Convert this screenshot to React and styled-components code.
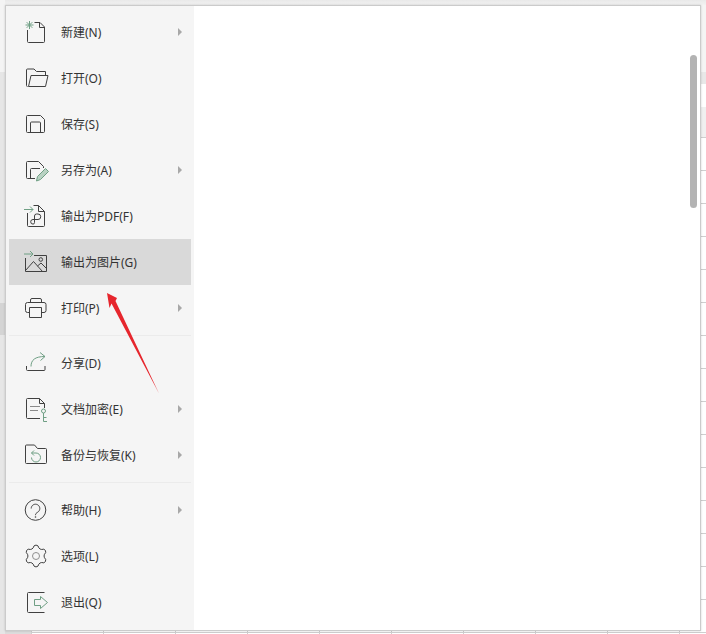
import React from "react";
import styled, { createGlobalStyle } from "styled-components";

const GlobalStyle = createGlobalStyle`
  html, body { margin: 0; padding: 0; background: #fff; }
  body { font-family: "Noto Sans", "Noto Sans CJK SC", sans-serif; }
`;

const ink = "#404040";
const green = "#6f9f84";

// six rounded lobes round the centre of the 32 box
const gearPath = () => {
  const at = (deg, r) => {
    const a = (deg * Math.PI) / 180;
    return `${(16 + r * Math.cos(a)).toFixed(1)} ${(16 + r * Math.sin(a)).toFixed(1)}`;
  };
  let d = `M${at(-101, 10.3)}`;
  for (let k = 0; k < 6; k++) {
    const a = -90 + k * 60;
    d += ` Q${at(a, 11.8)} ${at(a + 11, 10.3)}`;
    d += ` Q${at(a + 30, 6.4)} ${at(a + 49, 10.3)}`;
  }
  return d + "z";
};

const icons = {
  new: (
    <>
      <path d="M14.500 6.500H20L24.500 11V25.500a1 1 0 0 1-1 1H8.500a1 1 0 0 1-1-1V14" stroke={ink} />
      <path d="M19.500 6.500V11.500H24.500" stroke={ink} />
      <path d="M9.500 5v8M5.500 9h8M6.700 6.200l5.600 5.600M12.300 6.200l-5.600 5.600" stroke={green} />
    </>
  ),
  open: (
    <>
      <path d="M7.500 24.500a1 1 0 0 1-1-1V8a1 1 0 0 1 1-1h6.500l2.500 2.500H25.500V13.500" stroke={ink} />
      <path d="M11 13.500H28L25.500 24.500H8.500z" stroke={ink} />
    </>
  ),
  save: (
    <>
      <path d="M7.500 7.500H20.500L24.500 11.500V23.500a1 1 0 0 1-1 1H7.500a1 1 0 0 1-1-1V8.500a1 1 0 0 1 1-1z" stroke={ink} />
      <path d="M10.500 24.500V15a1 1 0 0 1 1-1H19.500a1 1 0 0 1 1 1V24.500" stroke={ink} />
    </>
  ),
  saveAs: (
    <>
      <path d="M15 24.500H7.500a1 1 0 0 1-1-1V8.500a1 1 0 0 1 1-1H18.500L23.500 12.500V14" stroke={ink} />
      <path d="M10.500 24.500V15.500a1 1 0 0 1 1-1H20" stroke={ink} />
      <path d="M16.500 27l1-4.500 8-8 3 3-8 8z" stroke={green} fill="#b9d2c3" />
    </>
  ),
  pdf: (
    <>
      <path d="M7.500 13V25.500a1 1 0 0 0 1 1H23.500a1 1 0 0 0 1-1V11.500L18.500 5.500H13.500" stroke={ink} />
      <path d="M18.500 5.500V11.500H24.500" stroke={ink} />
      <path d="M4 9.500H13M10 6.500l3 3-3 3" stroke={green} />
      <path d="M14.500 20V16a2 2 0 0 1 2-2H18a2.700 2.700 0 0 1 0 5.500H13a2.300 2.300 0 0 0 0 4.600h0a1.500 1.500 0 0 0 1.500-1.500V20" stroke={ink} />
    </>
  ),
  image: (
    <>
      <path d="M14 9.500H26.500V25.500H5.500V12" stroke={ink} />
      <path d="M5.500 24.500L13.500 15.500 22.500 25.500M17.500 20L21 17 26.500 22.500" stroke={ink} />
      <circle cx="20.800" cy="13.500" r="1.800" stroke={ink} />
      <path d="M4 8H13M10 5l3 3-3 3" stroke={green} />
    </>
  ),
  print: (
    <>
      <path d="M10.500 10.500V8a1.500 1.500 0 0 1 1.500-1.500H20a1.500 1.500 0 0 1 1.500 1.500V10.500" stroke={ink} />
      <path d="M9.500 20.500H7.500a2 2 0 0 1-2-2V12.500a2 2 0 0 1 2-2H24a2 2 0 0 1 2 2V18.500a2 2 0 0 1-2 2H21.500" stroke={ink} />
      <path d="M9.500 15.500H21.500V25.500H9.500z" stroke={ink} />
    </>
  ),
  share: (
    <>
      <path d="M6.500 19V22.500a1 1 0 0 0 1 1H24a1 1 0 0 0 1-1V19" stroke={ink} />
      <path d="M11 19.500C11 13 15 9.500 25 9.500M20 5.500l5 4-4.500 4" stroke={green} />
    </>
  ),
  encrypt: (
    <>
      <path d="M20 25.500H7.500a1 1 0 0 1-1-1V6.500a1 1 0 0 1 1-1H19.500L24.500 10.500V15" stroke={ink} />
      <path d="M19.500 5.500V10.500H24.500" stroke={ink} />
      <path d="M10 13.500H20M10 17.500H18" stroke="#8a8a8a" />
      <circle cx="23.500" cy="18" r="2" stroke={green} />
      <path d="M23.500 20V28.500H27M23.500 24.500H26.500" stroke={green} />
    </>
  ),
  backup: (
    <>
      <path d="M5.500 7a1 1 0 0 1 1-1h8l3 3.500H25.500a1 1 0 0 1 1 1V23.500a1 1 0 0 1-1 1H6.500a1 1 0 0 1-1-1z" stroke={ink} />
      <path d="M14 11.500l-2.500 2.500 2.500 2.500M11.500 14H16a4.500 4.500 0 1 1-4.500 4.500" stroke={green} />
    </>
  ),
  help: (
    <>
      <circle cx="15.500" cy="16" r="10.300" stroke={ink} />
      <path d="M11.200 14.500a4.300 4.300 0 1 1 6.500 3.700c-1.500.9-2.200 1.500-2.200 3" stroke={ink} />
      <circle cx="15.500" cy="23" r="0.800" fill={ink} />
    </>
  ),
  options: (
    <>
      <path d={gearPath()} stroke={ink} />
      <circle cx="16" cy="16" r="3.500" stroke="#8f8f8f" />
    </>
  ),
  exit: (
    <>
      <path d="M24.500 6.500H8.500a1 1 0 0 0-1 1V25.500a1 1 0 0 0 1 1H24.500" stroke={ink} />
      <path d="M14.500 13.500H20.500V10.500L27.500 16.500 20.500 22.500V19.500H14.500z" stroke={green} />
    </>
  ),
};

const groups = [
  [
    { id: "new", label: "新建(N)", more: true },
    { id: "open", label: "打开(O)" },
    { id: "save", label: "保存(S)" },
    { id: "saveAs", label: "另存为(A)", more: true },
    { id: "pdf", label: "输出为PDF(F)" },
    { id: "image", label: "输出为图片(G)", active: true },
    { id: "print", label: "打印(P)", more: true },
  ],
  [
    { id: "share", label: "分享(D)" },
    { id: "encrypt", label: "文档加密(E)", more: true },
    { id: "backup", label: "备份与恢复(K)", more: true },
  ],
  [
    { id: "help", label: "帮助(H)", more: true },
    { id: "options", label: "选项(L)" },
    { id: "exit", label: "退出(Q)" },
  ],
];

export default function App() {
  return (
    <>
      <GlobalStyle />
      <Page>
        <Menu>
          <Sidebar>
            {groups.map((items, i) => (
              <Group key={i} $first={i === 0}>
                {items.map((item) => (
                  <Row key={item.id} $active={item.active}>
                    <Icon viewBox="0 0 32 32" fill="none" strokeWidth="1">
                      {icons[item.id]}
                    </Icon>
                    <Label>{item.label}</Label>
                    {item.more && <Caret />}
                  </Row>
                ))}
              </Group>
            ))}
          </Sidebar>
          <Content>
            <Thumb />
          </Content>
        </Menu>
        <Arrow viewBox="0 0 62 106" aria-hidden="true">
          <path d="M7 3L17 8 15.500 11 59 103.500 11.500 13.500 9.500 18z" fill="#e6262d" />
        </Arrow>
      </Page>
    </>
  );
}

// the sheet behind the menu only shows as thin strips round its edge
const Page = styled.div`
  position: relative;
  width: 706px;
  height: 634px;
  padding: 5px;
  box-sizing: border-box;
  overflow: hidden;
  background:
    linear-gradient(#f4f4f4 0 72px, #e6e6e6 72px 303px, #d4d4d4 303px 335px, #e6e6e6 335px) 0 0 / 5px 100% no-repeat,
    linear-gradient(#dcdcdc, #dcdcdc) 0 629px / 31px 5px no-repeat,
    linear-gradient(#e9e9e9, #f2f2f2) 0 0 / 100% 5px no-repeat,
    repeating-linear-gradient(to right, #cfcfcf 0 1px, transparent 1px 72px) 31px 629px / 100% 5px no-repeat,
    linear-gradient(#cfcfcf, #cfcfcf) 0 632px / 100% 1px no-repeat,
    repeating-linear-gradient(to bottom, #cfcfcf 0 1px, transparent 1px 33px) 701px 137px / 5px 100% no-repeat,
    linear-gradient(#f4f4f4 0 72px, #e8e8e8 72px 84px, #fff 84px 107px, #f0f0f0 107px 137px, #fff 137px) 701px 0 / 5px 100% no-repeat,
    #fff;
`;

const Menu = styled.div`
  display: flex;
  height: 100%;
  border: 1px solid #cbcbcb;
  box-shadow: 0 0 2px rgba(0, 0, 0, 0.18);
  background: #fff;
`;

const Sidebar = styled.nav`
  width: 188px;
  flex: none;
  display: flex;
  flex-direction: column;
  padding: 3px 3px 0;
  box-sizing: border-box;
  background: #f5f5f5;
`;

const Group = styled.div`
  display: flex;
  flex-direction: column;
  border-top: ${(p) => (p.$first ? "none" : "1px solid #ebebeb")};
  padding: ${(p) => (p.$first ? "0 0 4px" : "4px 0")};
`;

const Row = styled.div`
  display: flex;
  align-items: center;
  height: 46px;
  flex: none;
  padding-left: 11px;
  padding-right: 9px;
  background: ${(p) => (p.$active ? "#d9d9d9" : "transparent")};
`;

const Icon = styled.svg`
  width: 32px;
  height: 32px;
  flex: none;
  margin-right: 9px;
`;

const Label = styled.span`
  flex: 1;
  font-size: 12px;
  color: #333;
  white-space: nowrap;
`;

const Caret = styled.span`
  width: 0;
  height: 0;
  border-left: 4px solid #a8a8a8;
  border-top: 4px solid transparent;
  border-bottom: 4px solid transparent;
`;

const Content = styled.div`
  flex: 1;
  position: relative;
  background: #fff;
`;

const Thumb = styled.div`
  position: absolute;
  top: 49px;
  right: 3px;
  width: 7px;
  height: 153px;
  border-radius: 4px;
  background: #b3b3b3;
`;

const Arrow = styled.svg`
  position: absolute;
  left: 100px;
  top: 290px;
  width: 62px;
  height: 106px;
`;
